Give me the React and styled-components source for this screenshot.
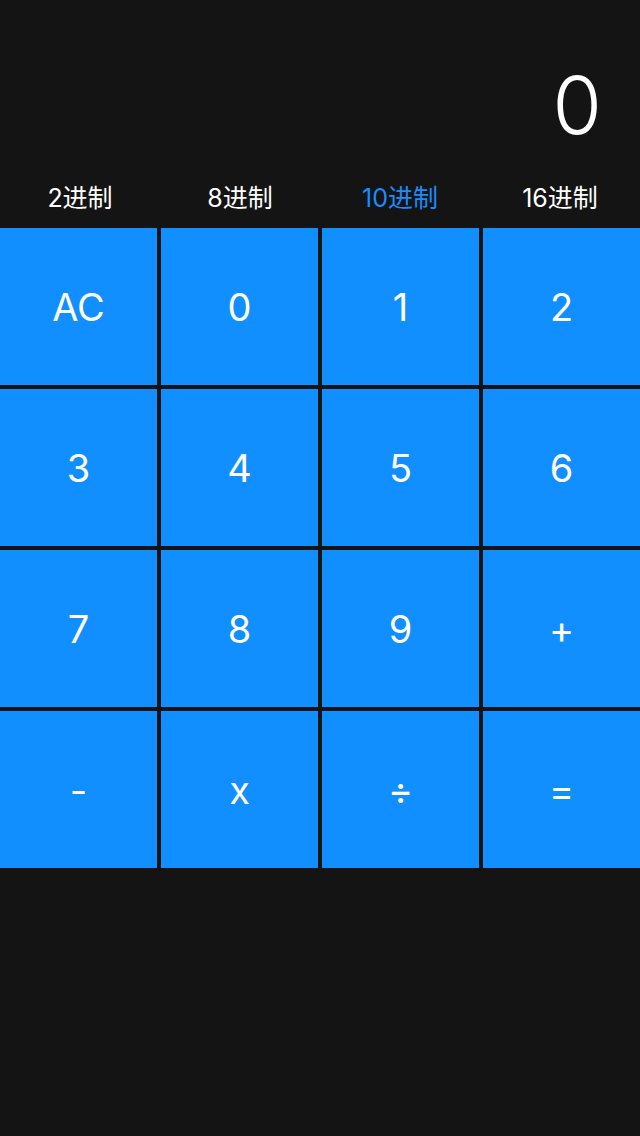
import React, { useState } from "react";
import styled, { createGlobalStyle } from "styled-components";

const GlobalStyle = createGlobalStyle`
  html, body {
    margin: 0;
    padding: 0;
    background: #141414;
  }
  body {
    font-family: Inter, "Noto Sans CJK SC", sans-serif;
    -webkit-font-smoothing: antialiased;
  }
`;

const Page = styled.div`
  width: 640px;
  height: 1136px;
  background: #141414;
  display: flex;
  flex-direction: column;
`;

const Display = styled.div`
  height: 168px;
  display: flex;
  align-items: center;
  justify-content: flex-end;
  padding: 0 38px 0 0;
  padding-top: 40px;
  box-sizing: border-box;
  color: #fff;
  font-size: 80px;
  font-weight: 300;
`;

const Tabs = styled.div`
  display: grid;
  grid-template-columns: repeat(4, 1fr);
  height: 60px;
  align-items: center;
`;

const Tab = styled.button`
  background: none;
  border: none;
  padding: 0 0 4px;
  font-family: Inter, "Noto Sans CJK SC", sans-serif;
  font-size: 25px;
  color: ${(p) => (p.$active ? "#1a8cff" : "#fff")};
  cursor: pointer;
`;

const Keypad = styled.div`
  display: grid;
  grid-template-columns: repeat(4, 157px);
  grid-auto-rows: 157px;
  gap: 4px;
`;

const Key = styled.button`
  background: #118eff;
  border: none;
  padding: 0;
  color: #fff;
  font-family: Inter, "Noto Sans CJK SC", sans-serif;
  font-size: 38px;
  font-weight: 400;
  cursor: pointer;
`;

const tabs = ["2进制", "8进制", "10进制", "16进制"];
const keys = ["AC", "0", "1", "2", "3", "4", "5", "6", "7", "8", "9", "+", "-", "x", "÷", "="];

const App = () => {
  const [base, setBase] = useState(2);
  const [value, setValue] = useState("0");

  const handleKey = (k) => {
    if (k === "AC") setValue("0");
    else if (/\d/.test(k)) setValue(value === "0" ? k : value + k);
  };

  return (
    <Page>
      <GlobalStyle />
      <Display>{value}</Display>
      <Tabs>
        {tabs.map((t, i) => (
          <Tab key={t} $active={base === i} onClick={() => setBase(i)}>
            {t}
          </Tab>
        ))}
      </Tabs>
      <Keypad>
        {keys.map((k) => (
          <Key key={k} onClick={() => handleKey(k)}>
            {k}
          </Key>
        ))}
      </Keypad>
    </Page>
  );
};

export default App;
